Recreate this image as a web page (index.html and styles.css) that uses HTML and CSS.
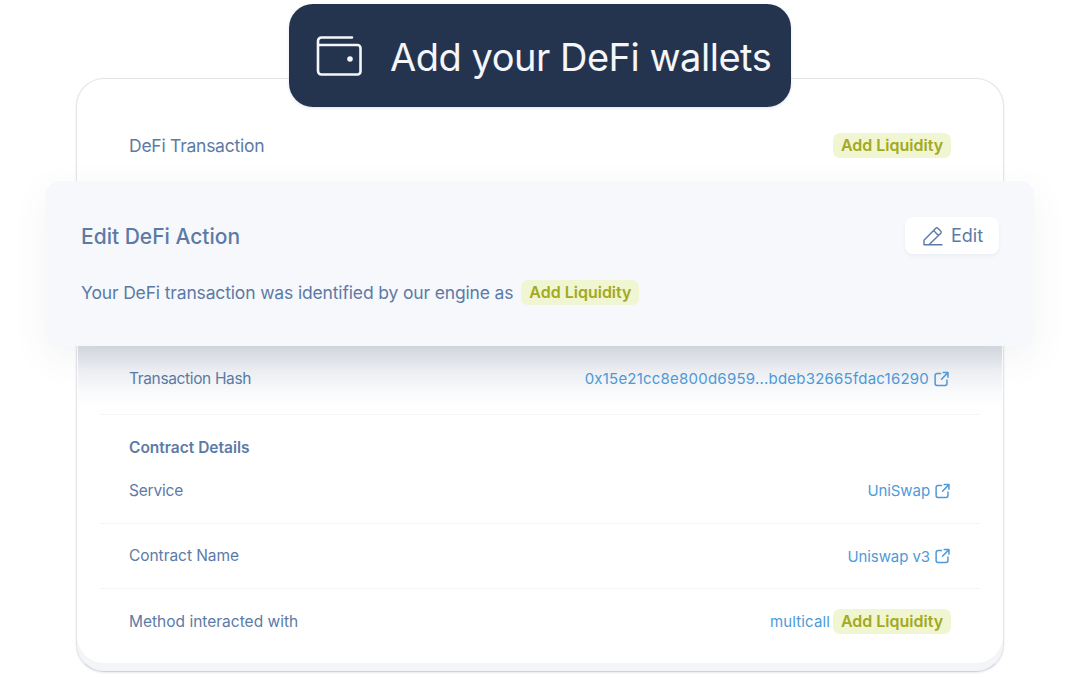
FILE: index.html
```html
<!DOCTYPE html>
<html lang="en">
<head>
<meta charset="utf-8">
<title>Add your DeFi wallets</title>
<link rel="stylesheet" href="styles.css">
</head>
<body>
<svg class="sprite" width="0" height="0" aria-hidden="true">
  <symbol id="ext" viewBox="0 0 16 16"><path d="M7 2.2H3.2A2 2 0 0 0 1.2 4.2v8.6a2 2 0 0 0 2 2h8.6a2 2 0 0 0 2-2V9M8 8.2 14.8 1.2M9.8 1.1h5.1v5.1" fill="none" stroke="currentColor" stroke-width="1.6" stroke-linecap="round" stroke-linejoin="round"/></symbol>
</svg>
<main class="stage">
  <section class="card">
    <div class="row row-top">
      <span class="label label-lg">DeFi Transaction</span>
      <span class="badge">Add Liquidity</span>
    </div>
    <div class="row row-hash">
      <span class="label label-hash">Transaction Hash</span>
      <a class="link link-hash">0x15e21cc8e800d6959...bdeb32665fdac16290<svg class="ext"><use href="#ext"/></svg></a>
    </div>
    <h3 class="section-title">Contract Details</h3>
    <div class="row row-service">
      <span class="label label-tight">Service</span>
      <a class="link">UniSwap<svg class="ext"><use href="#ext"/></svg></a>
    </div>
    <div class="row row-contract">
      <span class="label">Contract Name</span>
      <a class="link">Uniswap v3<svg class="ext"><use href="#ext"/></svg></a>
    </div>
    <div class="row row-method">
      <span class="label label-wide">Method interacted with</span>
      <span class="method"><a class="link link-method">multicall</a><span class="badge">Add Liquidity</span></span>
    </div>
  </section>

  <header class="pill">
    <svg class="wallet" viewBox="0 0 46 40" fill="none" stroke="#f4f6fa" stroke-width="2.6" stroke-linecap="round" stroke-linejoin="round">
      <path d="M36 1.5H5.5a3.5 3.5 0 0 0-3.5 3.5v30a3.5 3.5 0 0 0 3.5 3.5h36a3 3 0 0 0 3-3V12a3 3 0 0 0-3-3H2"/>
      <circle cx="34" cy="23" r="1.5" fill="#f4f6fa"/>
    </svg>
    <span class="pill-text">Add your DeFi wallets</span>
  </header>

  <section class="panel">
    <div class="panel-head">
      <h2 class="panel-title">Edit DeFi Action</h2>
      <button class="edit">
        <svg class="pencil" viewBox="0 0 20 20" fill="none" stroke="currentColor" stroke-width="1.4" stroke-linecap="round" stroke-linejoin="round"><path d="M1 18.5v-4.2L12.8 2.2a1.4 1.4 0 0 1 2 0l3 3a1.4 1.4 0 0 1 0 2L6 18.7H1M10.6 4.6l4.8 4.8M7 18.7h12"/></svg>
        Edit
      </button>
    </div>
    <p class="panel-text">Your DeFi transaction was identified by our engine as <span class="badge">Add Liquidity</span></p>
  </section>
</main>
</body>
</html>
```
FILE: styles.css
```css
* { box-sizing: border-box; }
html, body { margin: 0; background: #fff; }
body { font-family: Inter, "Liberation Sans", sans-serif; color: #5b7ba6; }
.sprite { position: absolute; }
.stage { position: relative; width: 1080px; height: 679px; overflow: hidden; padding: 78px 76px 0; }

.card {
  height: 594px;
  display: flex;
  flex-direction: column;
  padding: 0 23px;
  background: #fff;
  border: 1px solid #e3e5e9;
  border-bottom-color: #cfd2d8;
  border-radius: 28px;
  box-shadow: inset 0 -8px 0 #f4f5f8, 0 1px 2px rgba(60, 70, 90, .12);
}
.row { display: flex; align-items: center; justify-content: space-between; padding: 0 29px; flex: none; }
.row-top { align-items: flex-start; padding-top: 54px; height: 267px; }
.row-hash {
  height: 69px;
  margin: 0 -22px;
  padding: 0 52px 4px;
  background: linear-gradient(#d8dde4 0, #eef0f4 24px, #fafbfc 48px, #fff 62px);
  position: relative;
}
.row-hash::after { content: ""; position: absolute; left: 22px; right: 22px; bottom: 0; border-bottom: 1px solid #f3f5f8; }
.section-title { margin: 24px 29px 0; font-size: 15.5px; line-height: 18px; font-weight: 600; }
.row-service { height: 66px; border-bottom: 1px solid #f3f5f8; margin-top: 1px; }
.row-contract { height: 65px; border-bottom: 1px solid #f3f5f8; }
.row-method { height: 65px; }

.label { font-size: 15.5px; letter-spacing: -.05px; line-height: 20px; }
.label-hash { letter-spacing: -.36px; margin-left: -1px; }
.label-tight { letter-spacing: -.2px; }
.label-wide { letter-spacing: 0; }
.label-lg { font-size: 17.5px; letter-spacing: -.25px; line-height: 26px; }
.link { display: inline-flex; align-items: center; font-size: 15px; letter-spacing: -.08px; color: #4f9ad8; }
.link-hash { letter-spacing: .22px; }
.link-method { letter-spacing: .12px; }
.ext { width: 15px; height: 16px; margin: 0 1px 0 5px; }
.method { display: inline-flex; align-items: center; gap: 3px; }

.badge {
  display: inline-block;
  width: 118px;
  height: 25px;
  line-height: 25px;
  text-align: center;
  border-radius: 7px;
  background: #f0f5d2;
  color: #a3a920;
  font-size: 16px;
  font-weight: 600;
  letter-spacing: 0;
}

.pill {
  position: absolute;
  left: 289px;
  top: 4px;
  width: 502px;
  height: 103px;
  display: flex;
  align-items: center;
  padding-left: 27px;
  background: #24344f;
  border-radius: 24px;
  box-shadow: 0 1px 3px rgba(40, 60, 90, .15);
  color: #f4f6fa;
}
.wallet { width: 46px; height: 40px; flex: none; margin-right: 28px; }
.pill-text { font-size: 38px; letter-spacing: -.48px; white-space: nowrap; padding-top: 2px; }

.panel {
  position: absolute;
  left: 46px;
  top: 181px;
  width: 988px;
  height: 165px;
  padding: 36px 35px 0;
  background: #f7f8fc;
  border-radius: 14px;
  box-shadow: 0 12px 36px rgba(70, 80, 100, .07);
}
.panel-head { display: flex; align-items: center; justify-content: space-between; height: 37px; }
.panel-title { margin: 2px 0 0; font-size: 21px; font-weight: 500; letter-spacing: 0; }
.edit {
  display: flex;
  align-items: center;
  justify-content: center;
  gap: 8px;
  width: 94px;
  height: 37px;
  padding: 0 0 0 2px;
  border: 0;
  border-radius: 8px;
  background: #fff;
  box-shadow: 0 2px 4px rgba(90, 110, 140, .07);
  color: #5b7ba6;
  font: 400 18px Inter, "Liberation Sans", sans-serif;
}
.pencil { width: 20px; height: 20px; flex: none; }
.panel-text { margin: 25px 0 0; display: flex; align-items: center; gap: 8px; height: 26px; font-size: 17.5px; letter-spacing: -.15px; }
.panel-text .badge { letter-spacing: 0; }
```
